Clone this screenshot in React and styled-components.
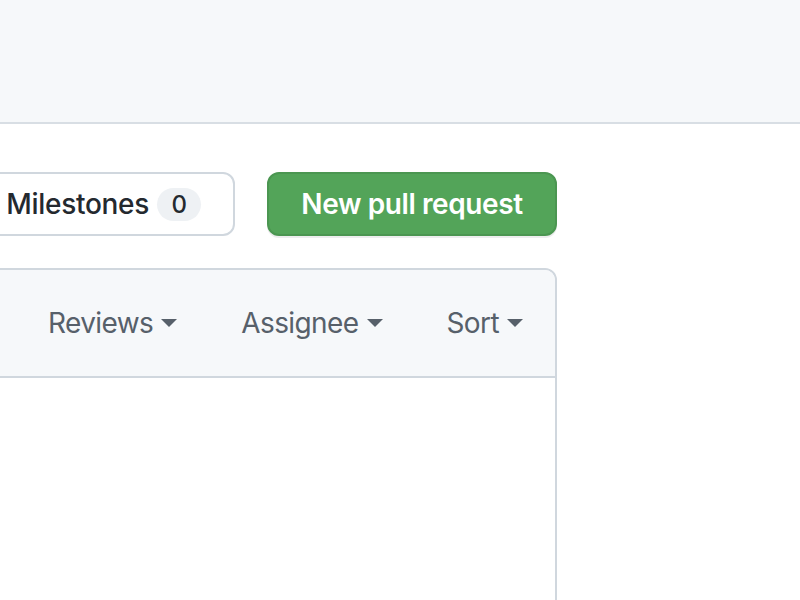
import React from "react";
import styled, { createGlobalStyle } from "styled-components";

const GlobalStyle = createGlobalStyle`
  html, body {
    margin: 0;
    padding: 0;
    background: #ffffff;
    overflow: hidden;
  }
  body {
    font-family: Inter, "Liberation Sans", Arial, sans-serif;
    color: #24292f;
  }
`;

const Page = styled.div`
  width: 800px;
  height: 600px;
  overflow: hidden;
`;

const TopBar = styled.header`
  height: 122px;
  background: #f6f8fa;
  border-bottom: 2px solid #d8dee4;
`;

/* the page is wider than the shot: content is right-aligned and spills off the left edge */
const Layout = styled.div`
  display: flex;
  justify-content: flex-end;
  padding-right: 243px;
`;

const Main = styled.main`
  flex-shrink: 0;
  width: 1100px;
  padding-top: 48px;
  display: flex;
  flex-direction: column;
  gap: 32px;
`;

const ActionRow = styled.div`
  display: flex;
  justify-content: flex-end;
  align-items: center;
  gap: 32px;
`;

const ButtonGroup = styled.div`
  display: flex;
  flex-shrink: 0;
`;

const NavButton = styled.a`
  display: flex;
  align-items: center;
  gap: 8px;
  height: 64px;
  box-sizing: border-box;
  padding: 0 32px;
  background: #ffffff;
  border: 2px solid #d0d7de;
  border-radius: ${({ $first }) => ($first ? "12px 0 0 12px" : "0 12px 12px 0")};
  margin-left: ${({ $first }) => ($first ? "0" : "-2px")};
  font-size: 28px;
  font-weight: 500;
  letter-spacing: -0.3px;
  color: #24292f;
  white-space: nowrap;
`;

const Counter = styled.span`
  display: inline-flex;
  align-items: center;
  justify-content: center;
  min-width: 44px;
  height: 33px;
  padding: 0 12px;
  box-sizing: border-box;
  border-radius: 17px;
  background: #eef1f4;
  font-size: 24px;
  font-weight: 500;
  color: #24292f;
`;

const PrimaryButton = styled.button`
  flex-shrink: 0;
  height: 64px;
  width: 290px;
  padding: 0 32px;
  box-sizing: border-box;
  background: #53a459;
  border: 2px solid #4b9651;
  border-radius: 12px;
  box-shadow: 0 2px 0 rgba(27, 31, 36, 0.08);
  font-family: inherit;
  font-size: 28px;
  font-weight: 600;
  letter-spacing: -0.4px;
  color: #ffffff;
  white-space: nowrap;
`;

const Box = styled.section`
  border: 2px solid #d0d7de;
  border-radius: 12px 12px 0 0;
  height: 400px;
  box-sizing: border-box;
`;

const BoxHeader = styled.div`
  height: 106px;
  display: flex;
  justify-content: flex-end;
  align-items: center;
  background: #f6f8fa;
  border-bottom: 2px solid #d0d7de;
  border-radius: 10px 10px 0 0;
  overflow: hidden;
`;

const FilterItem = styled.span`
  display: flex;
  align-items: center;
  gap: 8px;
  padding: 0 32px;
  flex-shrink: 0;
  font-size: 28px;
  letter-spacing: -0.6px;
  color: #57606a;
  white-space: nowrap;
`;

const Caret = () => (
  <svg width="16" height="8" viewBox="0 0 16 8" aria-hidden="true">
    <path d="M0 0h16L8 8z" fill="#57606a" />
  </svg>
);

const filters = ["Author", "Label", "Projects", "Milestones", "Reviews", "Assignee", "Sort"];

export default function App() {
  return (
    <Page>
      <GlobalStyle />
      <TopBar />
      <Layout>
        <Main>
          <ActionRow>
            <ButtonGroup>
              <NavButton $first>
                Labels <Counter>9</Counter>
              </NavButton>
              <NavButton>
                Milestones <Counter>0</Counter>
              </NavButton>
            </ButtonGroup>
            <PrimaryButton>New pull request</PrimaryButton>
          </ActionRow>
          <Box>
            <BoxHeader>
              {filters.map((f) => (
                <FilterItem key={f}>
                  {f}
                  <Caret />
                </FilterItem>
              ))}
            </BoxHeader>
          </Box>
        </Main>
      </Layout>
    </Page>
  );
}
